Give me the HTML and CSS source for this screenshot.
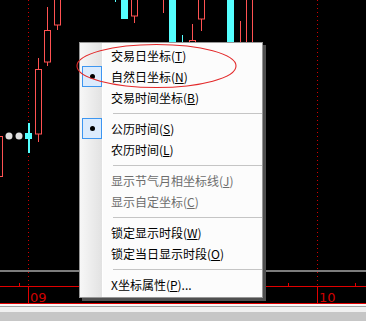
FILE: index.html
```html
<!DOCTYPE html>
<html lang="zh-CN">
<head>
  <meta charset="UTF-8">
  <title>X坐标菜单</title>
  <link rel="stylesheet" href="styles.css">
</head>
<body>

<div class="screen">
  <svg class="chart" width="366" height="304" viewBox="0 0 366 304">
    <rect x="0" y="0" width="366" height="304" fill="#000"/>

    <!-- grid lines -->
    <line x1="28.5" y1="0" x2="28.5" y2="286" class="dots"/>
    <line x1="317.5" y1="0" x2="317.5" y2="286" class="dots"/>
    <rect x="0" y="270" width="366" height="2" fill="#7c7c7c"/>
    <rect x="0" y="286" width="366" height="1" fill="#e00000"/>
    <rect x="19" y="283" width="1" height="3" fill="#e00000"/>
    <rect x="288" y="283" width="1" height="3" fill="#e00000"/>
    <rect x="355" y="283" width="1" height="3" fill="#e00000"/>
    <rect x="28" y="286" width="1" height="17" fill="#e00000"/>
    <rect x="317" y="286" width="1" height="17" fill="#e00000"/>
    <text x="30" y="302" class="axis">09</text>
    <text x="319" y="302" class="axis">10</text>
    <rect x="0" y="303" width="366" height="1" fill="#e00000"/>

    <!-- candles -->
    <g class="up">
      <rect x="-5" y="136.5" width="7.5" height="40"/>
      <rect x="35.5" y="69.5" width="6" height="64.5"/>
      <line x1="38.5" y1="58" x2="38.5" y2="69.5"/>
      <line x1="38.5" y1="134" x2="38.5" y2="142"/>
      <rect x="44.5" y="30.5" width="6" height="31.5"/>
      <line x1="47.5" y1="7" x2="47.5" y2="30.5"/>
      <line x1="47.5" y1="62" x2="47.5" y2="66"/>
      <rect x="54.5" y="-1" width="6" height="26"/>
      <line x1="57.5" y1="25" x2="57.5" y2="30"/>
      <rect x="131.5" y="-1" width="6" height="17"/>
      <line x1="134.5" y1="16" x2="134.5" y2="23"/>
      <line x1="163.5" y1="0" x2="163.5" y2="13"/>
      <rect x="189.5" y="40.5" width="6" height="8"/>
      <line x1="192.5" y1="24" x2="192.5" y2="40.5"/>
      <rect x="198.5" y="-1" width="6" height="20"/>
      <line x1="201.5" y1="19" x2="201.5" y2="31"/>
      <line x1="240.5" y1="21" x2="240.5" y2="50"/>
      <rect x="246.5" y="-1" width="6" height="60"/>
    </g>
    <g class="down">
      <rect x="28" y="123" width="2" height="30"/>
      <rect x="25" y="133" width="7" height="6"/>
      <rect x="115" y="0" width="1" height="2"/>
      <rect x="121" y="0" width="7" height="19"/>
      <rect x="169" y="0" width="7" height="50"/>
      <rect x="182" y="35" width="1" height="10"/>
      <rect x="227" y="0" width="7" height="50"/>
    </g>
    <circle cx="9" cy="136" r="3.5" fill="#dedede"/>
    <circle cx="19" cy="136" r="3.5" fill="#dedede"/>
  </svg>

  <div class="hscroll">
    <div class="hscroll-top"></div>
    <div class="hscroll-track"></div>
  </div>

  <ul class="menu">
    <li class="item"><span class="mark"></span>交易日坐标(<u>T</u>)</li>
    <li class="item"><span class="mark on"></span>自然日坐标(<u>N</u>)</li>
    <li class="item"><span class="mark"></span>交易时间坐标(<u>B</u>)</li>
    <li class="sep"></li>
    <li class="item"><span class="mark on"></span>公历时间(<u>S</u>)</li>
    <li class="item"><span class="mark"></span>农历时间(<u>L</u>)</li>
    <li class="sep"></li>
    <li class="item off"><span class="mark"></span>显示节气月相坐标线(<u>J</u>)</li>
    <li class="item off"><span class="mark"></span>显示自定坐标(<u>C</u>)</li>
    <li class="sep"></li>
    <li class="item"><span class="mark"></span>锁定显示时段(<u>W</u>)</li>
    <li class="item"><span class="mark"></span>锁定当日显示时段(<u>O</u>)</li>
    <li class="sep"></li>
    <li class="item"><span class="mark"></span>X坐标属性(<u>P</u>)...</li>
  </ul>

  <svg class="circle" width="166" height="48" viewBox="0 0 166 48">
    <ellipse cx="81.5" cy="24" rx="79.5" ry="21.5"/>
  </svg>
</div>

</body>
</html>
```

FILE: styles.css
```css
body {
  margin: 0;
  background: #000;
  font-family: "Noto Sans CJK SC", "Noto Sans", sans-serif;
}
.screen {
  position: relative;
  width: 366px;
  height: 321px;
  overflow: hidden;
  display: flex;
  flex-direction: column;
}
.chart {
  display: block;
  flex: none;
}
.dots {
  stroke: #d00000;
  stroke-width: 1;
  stroke-dasharray: 1 3;
}
.axis {
  fill: #d00000;
  font-family: "DejaVu Sans", sans-serif;
  font-size: 13px;
}
.up rect, .up line {
  fill: none;
  stroke: #ff5252;
  stroke-width: 1;
}
.down rect {
  fill: #55ffff;
}

.hscroll {
  flex: 1;
  display: flex;
  flex-direction: column;
}
.hscroll-top {
  height: 2px;
  background: #f8f8f8;
  border-bottom: 1px solid #a0a0a0;
}
.hscroll-top + .hscroll-track {
  flex: 1;
  border-top: 5px solid #f0f0f0;
  background: #c6c6c6;
}

/* popup menu */
.menu {
  position: absolute;
  left: 79px;
  top: 42px;
  width: 182px;
  height: 252px;
  margin: 0;
  padding: 2px 0 0;
  list-style: none;
  border: 1px solid #979797;
  box-sizing: content-box;
  background: linear-gradient(to right, #f7f7f7 0, #e2e2e2 22px, #ffffff 22px, #ffffff 23px, #fcfcfc 23px);
  box-shadow: 3px 3px 0 #505050;
  font-size: 12px;
  color: #000;
}
.item {
  height: 21px;
  display: flex;
  align-items: center;
  white-space: nowrap;
}
.item.off {
  color: #6d6d6d;
}
.item u {
  text-underline-offset: 1px;
}
.mark {
  flex: none;
  width: 18px;
  height: 19px;
  margin: 0 9px 0 2px;
  border: 1px solid transparent;
  display: flex;
  align-items: center;
  justify-content: center;
}
.mark.on {
  background: #dcebfc;
  border-color: #3d96f0;
}
.mark.on::before {
  content: "";
  width: 5px;
  height: 5px;
  border-radius: 50%;
  background: #000;
}
.sep {
  height: 10px;
  display: flex;
  align-items: center;
  padding-left: 33px;
}
.sep::before {
  content: "";
  flex: 1;
  height: 1px;
  background: #c5c5c5;
}

.circle {
  position: absolute;
  left: 75px;
  top: 42px;
}
.circle ellipse {
  fill: none;
  stroke: #e3292a;
  stroke-width: 1.1;
}
```
